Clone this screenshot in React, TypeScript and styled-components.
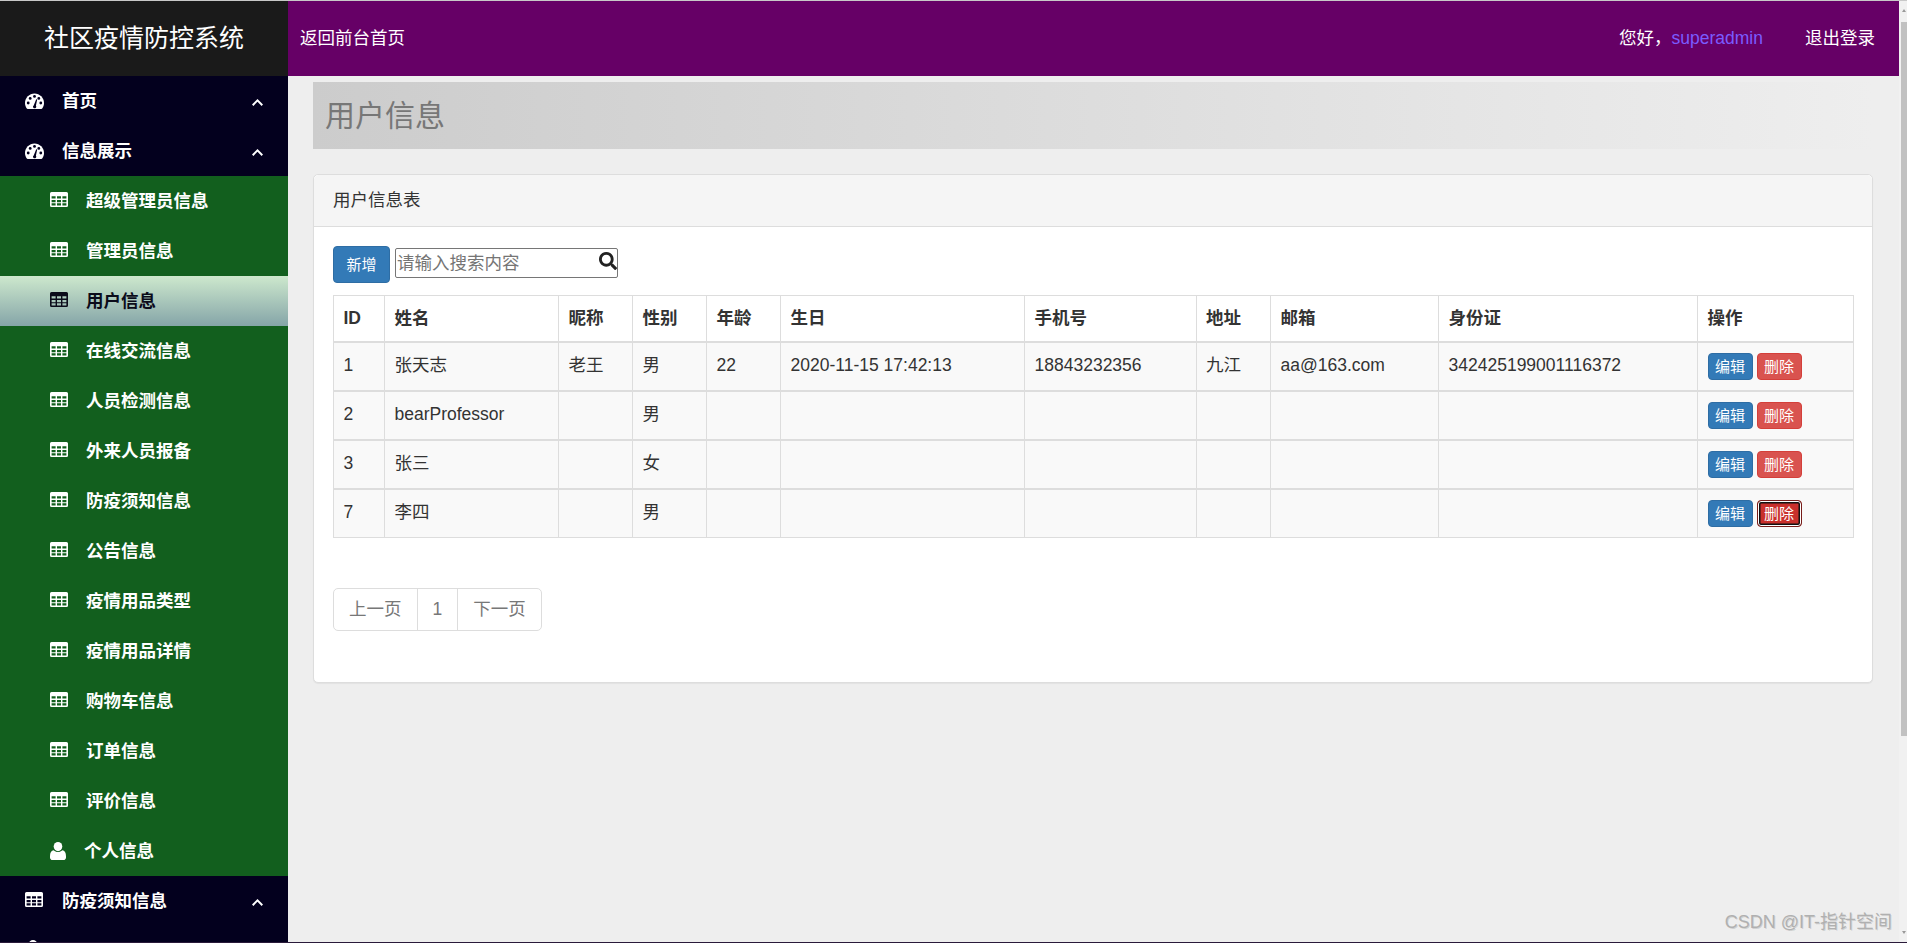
import styled, { createGlobalStyle } from 'styled-components';
import { FaSearch } from 'react-icons/fa';

const subMenus = [
  '超级管理员信息',
  '管理员信息',
  '用户信息',
  '在线交流信息',
  '人员检测信息',
  '外来人员报备',
  '防疫须知信息',
  '公告信息',
  '疫情用品类型',
  '疫情用品详情',
  '购物车信息',
  '订单信息',
  '评价信息',
];

const columns = [
  { title: 'ID', width: 51 },
  { title: '姓名', width: 174 },
  { title: '昵称', width: 74 },
  { title: '性别', width: 74 },
  { title: '年龄', width: 74 },
  { title: '生日', width: 244 },
  { title: '手机号', width: 171.5 },
  { title: '地址', width: 74.5 },
  { title: '邮箱', width: 168 },
  { title: '身份证', width: 259 },
  { title: '操作', width: 156 },
];

const users = [
  ['1', '张天志', '老王', '男', '22', '2020-11-15 17:42:13', '18843232356', '九江', 'aa@163.com', '342425199001116372'],
  ['2', 'bearProfessor', '', '男', '', '', '', '', '', ''],
  ['3', '张三', '', '女', '', '', '', '', '', ''],
  ['7', '李四', '', '男', '', '', '', '', '', ''],
];

// font-awesome 4 style table: solid head band, 3x3 cells cut out
const tableCells = [4.2, 7.9, 11.2]
  .flatMap((y) => [1.6, 7, 12.4].map((x) => `M${x} ${y}h4v2.4h-4z`))
  .join('');

function TableIcon() {
  return (
    <svg width="18" height="15" viewBox="0 0 18 15" fill="currentColor" fillRule="evenodd">
      <path d={`M1.5 0h15a1.5 1.5 0 0 1 1.5 1.5v12a1.5 1.5 0 0 1-1.5 1.5h-15A1.5 1.5 0 0 1 0 13.5v-12A1.5 1.5 0 0 1 1.5 0z${tableCells}`} />
    </svg>
  );
}

function GaugeIcon() {
  return (
    <svg width="19" height="16" viewBox="0 0 19 16">
      <path
        fill="currentColor"
        d="M9.5 0.5C4.3 0.5 0 4.8 0 10c0 2.1.7 4 1.8 5.6.2.2.5.4.8.4h13.8c.3 0 .6-.2.8-.4C18.3 14 19 12.1 19 10c0-5.2-4.3-9.5-9.5-9.5z"
      />
      <g fill="#03001e">
        <circle cx="3.2" cy="10" r="1.4" />
        <circle cx="5.2" cy="5.4" r="1.4" />
        <circle cx="9.5" cy="3.4" r="1.4" />
        <circle cx="13.8" cy="5.4" r="1.4" />
        <circle cx="15.8" cy="10" r="1.4" />
        <path d="M11.2 6.2l1 .4-1.3 6.1c.5.6.5 1.4 0 2-.6.7-1.8.7-2.5 0-.6-.7-.5-1.8.3-2.3z" />
      </g>
    </svg>
  );
}

function PersonIcon() {
  return (
    <svg width="16" height="18" viewBox="0 0 16 18" fill="currentColor">
      <ellipse cx="8" cy="4.6" rx="4.3" ry="4.6" />
      <path d="M3.7 8.2C4.9 9.3 6.3 10 8 10s3.1-.7 4.3-1.8c2.4.2 3.7 2.3 3.7 6v1.2c0 1.5-1 2.6-2.6 2.6H2.6C1 18 0 16.900 0 15.400v-1.200c0-3.700 1.300-5.800 3.700-6z" />
    </svg>
  );
}

function CaretIcon() {
  return (
    <svg width="11" height="7" viewBox="0 0 11 7" fill="none" stroke="currentColor" strokeWidth="2">
      <path d="M0.700 6.200L5.500 1.400l4.800 4.800" />
    </svg>
  );
}

export default function App() {
  return (
    <>
      <GlobalStyle />
      <S.Shell>
        <S.Sidebar>
          <S.Brand>社区疫情防控系统</S.Brand>
          <S.MenuItem>
            <S.MenuIcon $top={17}><GaugeIcon /></S.MenuIcon>
            <S.MenuText>首页</S.MenuText>
            <S.Caret><CaretIcon /></S.Caret>
          </S.MenuItem>
          <S.MenuItem>
            <S.MenuIcon $top={17}><GaugeIcon /></S.MenuIcon>
            <S.MenuText>信息展示</S.MenuText>
            <S.Caret><CaretIcon /></S.Caret>
          </S.MenuItem>
          {subMenus.map((name) => (
            <S.SubItem key={name} $active={name === '用户信息'}>
              <S.SubIcon><TableIcon /></S.SubIcon>
              <S.MenuText>{name}</S.MenuText>
            </S.SubItem>
          ))}
          <S.SubItem>
            <S.UserIcon><PersonIcon /></S.UserIcon>
            <S.MenuText>个人信息</S.MenuText>
          </S.SubItem>
          <S.MenuItem>
            <S.MenuIcon $top={16}><TableIcon /></S.MenuIcon>
            <S.MenuText>防疫须知信息</S.MenuText>
            <S.Caret><CaretIcon /></S.Caret>
          </S.MenuItem>
          <S.MenuItem>
            <S.MenuIcon $top={14}><PersonIcon /></S.MenuIcon>
          </S.MenuItem>
        </S.Sidebar>

        <S.Main>
          <S.Topbar>
            <S.TopLink>返回前台首页</S.TopLink>
            <S.TopRight>
              <span>
                您好，<S.UserName>superadmin</S.UserName>
              </span>
              <S.TopLink>退出登录</S.TopLink>
            </S.TopRight>
          </S.Topbar>

          <S.Content>
            <S.PageTitle>用户信息</S.PageTitle>
            <S.Card>
              <S.CardHeader>用户信息表</S.CardHeader>
              <S.CardBody>
                <S.Toolbar>
                  <S.AddButton>新增</S.AddButton>
                  <S.SearchBox>
                    <S.SearchInput placeholder="请输入搜索内容" />
                    <S.SearchIcon><FaSearch size={18} /></S.SearchIcon>
                  </S.SearchBox>
                </S.Toolbar>

                <S.Table>
                  <colgroup>
                    {columns.map((col) => (
                      <S.Col key={col.title} $width={col.width} />
                    ))}
                  </colgroup>
                  <thead>
                    <tr>
                      {columns.map((col) => (
                        <S.Th key={col.title}>{col.title}</S.Th>
                      ))}
                    </tr>
                  </thead>
                  <tbody>
                    {users.map((user, rowIndex) => (
                      <tr key={user[0]}>
                        {user.map((value, cellIndex) => (
                          <S.Td key={cellIndex}>{value}</S.Td>
                        ))}
                        <S.Td>
                          <S.Actions>
                            <S.SmallButton $kind="edit">编辑</S.SmallButton>
                            <S.SmallButton $kind="delete" $focused={rowIndex === users.length - 1}>
                              删除
                            </S.SmallButton>
                          </S.Actions>
                        </S.Td>
                      </tr>
                    ))}
                  </tbody>
                </S.Table>

                <S.Pagination>
                  <S.PageItem>上一页</S.PageItem>
                  <S.PageItem>1</S.PageItem>
                  <S.PageItem>下一页</S.PageItem>
                </S.Pagination>
              </S.CardBody>
            </S.Card>
          </S.Content>
        </S.Main>

        <S.ScrollTrack>
          <S.ScrollArrow />
          <S.ScrollThumb />
          <S.ScrollArrowDown />
        </S.ScrollTrack>

        <S.Watermark>CSDN @IT-指针空间</S.Watermark>
      </S.Shell>
    </>
  );
}

const GlobalStyle = createGlobalStyle`
  * {
    box-sizing: border-box;
  }
  html, body {
    margin: 0;
    height: 100%;
    overflow: hidden;
  }
  body {
    font-family: "Liberation Sans", "Noto Sans CJK SC", sans-serif;
    font-size: 17.5px;
    line-height: 25px;
    color: #333;
    background: #eee;
  }
`;

const S = {
  Shell: styled.div`
    position: relative;
    display: flex;
    height: 100vh;
    overflow: hidden;
    border-top: 1px solid #c8c8c8;
    border-bottom: 1px solid #2a1a3a;
  `,
  Sidebar: styled.aside`
    flex: 0 0 288px;
    overflow: hidden;
    background: #03001e;
    color: #fff;
    font-weight: 700;
  `,
  Brand: styled.div`
    height: 75px;
    display: flex;
    align-items: center;
    justify-content: center;
    background: #1a1a1a;
    font-size: 25px;
    font-weight: 400;
  `,
  MenuItem: styled.div`
    height: 50px;
    display: flex;
    align-items: center;
    position: relative;
    padding-left: 25px;
    background: #03001e;
  `,
  MenuIcon: styled.span<{ $top: number }>`
    display: flex;
    align-self: flex-start;
    width: 37px;
    margin-top: ${(p) => p.$top}px;
  `,
  SubItem: styled.div<{ $active?: boolean }>`
    height: 50px;
    display: flex;
    align-items: center;
    padding-left: 50px;
    background: ${(p) => (p.$active ? 'linear-gradient(#cde8cd, #85a5a8)' : '#125f1e')};
    color: ${(p) => (p.$active ? '#0b0b1a' : '#fff')};
  `,
  SubIcon: styled.span`
    display: flex;
    align-self: flex-start;
    width: 36px;
    margin-top: 16px;
  `,
  UserIcon: styled.span`
    display: flex;
    width: 34px;
  `,
  MenuText: styled.span`
    white-space: nowrap;
  `,
  Caret: styled.span`
    display: flex;
    position: absolute;
    left: 252px;
    top: 23px;
  `,
  Main: styled.div`
    flex: 1;
    min-width: 0;
    display: flex;
    flex-direction: column;
  `,
  Topbar: styled.header`
    flex: 0 0 75px;
    display: flex;
    align-items: center;
    justify-content: space-between;
    padding: 0 24px 0 12px;
    background: #660066;
    color: #fff;
  `,
  TopLink: styled.span`
    color: #fff;
  `,
  TopRight: styled.div`
    display: flex;
    gap: 42px;
  `,
  UserName: styled.span`
    color: #7a5cff;
  `,
  Content: styled.main`
    padding: 6px 26px 0 25px;
  `,
  PageTitle: styled.h1`
    margin: 0 0 25px;
    height: 67px;
    display: flex;
    align-items: center;
    padding-left: 12px;
    font-size: 30px;
    font-weight: 400;
    color: #777;
    background: linear-gradient(to right, #ccc, #eee);
  `,
  Card: styled.section`
    background: #fff;
    border: 1px solid #ddd;
    border-radius: 5px;
    box-shadow: 0 1px 1px rgba(0, 0, 0, 0.05);
  `,
  CardHeader: styled.div`
    height: 52px;
    padding: 13px 19px 0;
    background: #f5f5f5;
    border-bottom: 1px solid #ddd;
    border-radius: 5px 5px 0 0;
  `,
  CardBody: styled.div`
    padding: 19px 19px 51px;
  `,
  Toolbar: styled.div`
    display: flex;
    align-items: flex-start;
    gap: 5px;
    margin-bottom: 12px;
  `,
  AddButton: styled.button`
    width: 57px;
    height: 37px;
    padding: 0;
    font: inherit;
    font-size: 15px;
    color: #fff;
    background: #337ab7;
    border: 1px solid #2e6da4;
    border-radius: 4px;
  `,
  SearchBox: styled.div`
    position: relative;
    width: 223px;
    height: 30px;
    margin-top: 2px;
  `,
  SearchInput: styled.input`
    width: 100%;
    height: 100%;
    padding: 0 2px 0 1px;
    font: inherit;
    color: #333;
    background: #fff;
    border: 1px solid #767676;
    border-radius: 2px;
    &::placeholder {
      color: #757575;
    }
  `,
  SearchIcon: styled.span`
    position: absolute;
    top: 4px;
    right: 1px;
    display: flex;
    color: #222;
  `,
  Table: styled.table`
    width: 1519px;
    table-layout: fixed;
    border-collapse: collapse;
    border: 1px solid #ddd;
  `,
  Col: styled.col<{ $width: number }>`
    width: ${(p) => p.$width}px;
  `,
  Th: styled.th`
    height: 46px;
    padding: 10px 10px 9px 9.5px;
    text-align: left;
    vertical-align: top;
    border: 1px solid #ddd;
    border-bottom: 2px solid #ddd;
  `,
  Td: styled.td`
    height: 49px;
    padding: 10.5px 10px 9px 9.5px;
    vertical-align: top;
    white-space: nowrap;
    background: #f9f9f9;
    border: 1px solid #ddd;
    border-top: 2px solid #ddd;
  `,
  Actions: styled.div`
    display: flex;
    gap: 4px;
  `,
  SmallButton: styled.button<{ $kind: 'edit' | 'delete'; $focused?: boolean }>`
    width: 45px;
    height: 27px;
    padding: 0;
    font: inherit;
    font-size: 15px;
    line-height: 25px;
    color: #fff;
    border-radius: 4px;
    border: 1px solid ${(p) => (p.$kind === 'edit' ? '#2e6da4' : p.$focused ? '#761c19' : '#d43f3a')};
    background: ${(p) => (p.$kind === 'edit' ? '#337ab7' : p.$focused ? '#c9302c' : '#d9534f')};
    box-shadow: ${(p) => (p.$focused ? 'inset 0 0 0 1px #fff, inset 0 0 0 2.5px #111' : 'none')};
  `,
  Pagination: styled.nav`
    display: inline-flex;
    margin-top: 50px;
    height: 43px;
    border: 1px solid #ddd;
    border-radius: 5px;
    color: #777;
    vertical-align: top;
  `,
  PageItem: styled.span`
    display: flex;
    align-items: center;
    padding: 0 15px;
    & + & {
      border-left: 1px solid #ddd;
    }
  `,
  ScrollTrack: styled.div`
    flex: 0 0 8px;
    display: flex;
    flex-direction: column;
    background: #f1f1f1;
  `,
  ScrollArrow: styled.div`
    width: 0;
    height: 0;
    margin: 8px 0 0 3px;
    border-left: 2px solid transparent;
    border-right: 2px solid transparent;
    border-bottom: 3px solid #999;
  `,
  ScrollThumb: styled.div`
    height: 714px;
    margin: 10px 0 0 2px;
    background: #c1c1c1;
  `,
  ScrollArrowDown: styled.div`
    width: 0;
    height: 0;
    margin: auto 0 8px 3px;
    border-left: 2px solid transparent;
    border-right: 2px solid transparent;
    border-top: 3px solid #999;
  `,
  Watermark: styled.div`
    position: absolute;
    right: 15px;
    bottom: 7px;
    font-size: 18px;
    color: #b0b0b0;
    text-shadow: 1px 1px 0 rgba(0, 0, 0, 0.12);
  `,
};
